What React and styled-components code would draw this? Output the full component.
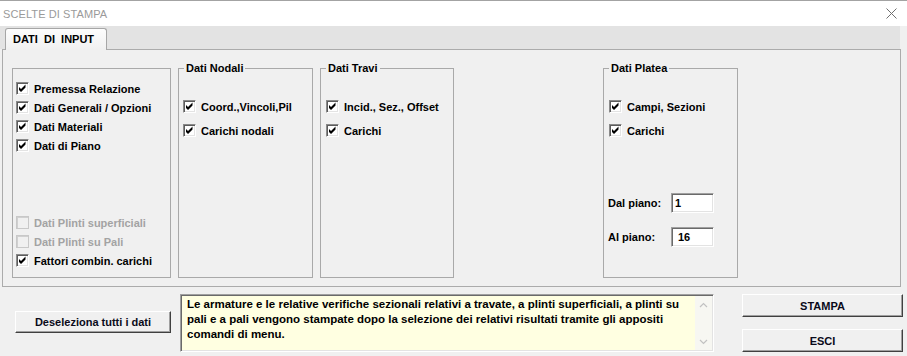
import React from 'react'
import styled, { createGlobalStyle } from 'styled-components'

const GlobalStyle = createGlobalStyle`
    html, body {
        margin:0;
        padding:0;
        background-color:#f0f0f0;
        font-family:"Liberation Sans", Arial, sans-serif;
        font-size:11px;
    }
`

const Window = styled.div`
    width:907px;
    height:356px;
    display:flex;
    flex-direction:column;
    background-color:#f0f0f0;
    overflow:hidden;
`

const TitleBar = styled.div`
    box-sizing:border-box;
    height:26px;
    border-top:1px solid #a3a3a3;
    background-color:#ffffff;
    display:flex;
    align-items:center;
    justify-content:space-between;
    padding:0 10px 0 3px;
`

const Title = styled.span`
    color:#9a9a9a;
    font-size:11px;
    letter-spacing:0.1px;
`

const TabStrip = styled.div`
    height:23px;
    margin-right:7px;
    padding-left:5px;
    background-color:#e3e3e3;
    display:flex;
    align-items:flex-end;
`

const Tab = styled.div`
    position:relative;
    z-index:1;
    box-sizing:border-box;
    width:102px;
    height:22px;
    margin-bottom:-1px;
    padding:4px 0 0 7px;
    border:1px solid #a6a6a6;
    border-bottom:none;
    border-radius:3px 3px 0 0;
    background:linear-gradient(#fdfdfd, #f0f0f0);
    font-weight:bold;
    white-space:pre;
    color:#000;
`

const Panel = styled.div`
    box-sizing:border-box;
    height:238px;
    margin:0 6px 0 2px;
    padding:18px 0 0 9px;
    border:1px solid #ababab;
    display:flex;
    gap:7px;
`

const GroupBox = styled.div`
    position:relative;
    box-sizing:border-box;
    width:${p => p.w}px;
    height:210px;
    margin-left:${p => p.ml || 0}px;
    border:1px solid #a9a9a9;
    display:flex;
    flex-direction:column;
    padding:${p => p.pad};
`

const Legend = styled.span`
    position:absolute;
    top:-7px;
    left:5px;
    padding:0 2px;
    background-color:#f0f0f0;
    font-weight:bold;
    line-height:13px;
`

const Row = styled.label`
    display:flex;
    align-items:center;
    gap:5px;
    height:19px;
    margin-top:${p => p.mt || 0}px;
    font-weight:bold;
    white-space:nowrap;
    color:${p => (p.disabled ? '#a3a3a3' : '#000')};
`

const Box = styled.span`
    box-sizing:border-box;
    width:13px;
    height:13px;
    flex:none;
    display:flex;
    border-top:1px solid #8a8a8a;
    border-left:1px solid #8a8a8a;
    border-bottom:1px solid #ffffff;
    border-right:1px solid #ffffff;
    box-shadow:inset 1px 1px #5c5c5c, inset -1px -1px #e3e3e3;
    background-color:${p => (p.disabled ? '#f0f0f0' : '#ffffff')};
    ${p => p.disabled && 'border-color:#c8c8c8; box-shadow:inset 1px 1px #d0d0d0;'}
`

const Spacer = styled.div`
    flex:1;
`

const FieldRow = styled.div`
    display:flex;
    align-items:center;
    height:20px;
    margin-top:${p => p.mt}px;
    margin-left:-1px;
    font-weight:bold;
`

const FieldLabel = styled.span`
    width:63px;
`

const Field = styled.div`
    box-sizing:border-box;
    width:43px;
    height:20px;
    padding:3px 0 0 ${p => p.indent}px;
    background-color:#ffffff;
    border-top:1px solid #a0a0a0;
    border-left:1px solid #a0a0a0;
    border-bottom:1px solid #ffffff;
    border-right:1px solid #ffffff;
    box-shadow:inset 1px 1px #6a6a6a, inset -1px -1px #e3e3e3;
    font-weight:bold;
`

const BottomBar = styled.div`
    display:flex;
    align-items:flex-start;
    margin-top:7px;
    padding-left:15px;
`

const Button = styled.div`
    box-sizing:border-box;
    width:${p => p.w}px;
    height:${p => p.h}px;
    margin-top:${p => p.mt || 0}px;
    display:flex;
    align-items:center;
    justify-content:center;
    background-color:#f0f0f0;
    border-top:1px solid #ffffff;
    border-left:1px solid #ffffff;
    border-bottom:1px solid #404040;
    border-right:1px solid #404040;
    box-shadow:inset -1px -1px #a0a0a0;
    font-weight:bold;
    color:#0a0a1a;
`

const Note = styled.div`
    box-sizing:border-box;
    width:534px;
    height:58px;
    margin-left:9px;
    display:flex;
    background-color:#ffffe1;
    border-top:1px solid #a0a0a0;
    border-left:1px solid #a0a0a0;
    border-bottom:1px solid #ffffff;
    border-right:1px solid #ffffff;
    box-shadow:inset 1px 1px #6a6a6a, inset -1px -1px #e3e3e3;
    padding:1px;
`

const NoteText = styled.div`
    flex:1;
    overflow:hidden;
    padding:1px 0 0 5px;
    font-size:11.5px;
    font-weight:bold;
    line-height:15px;
    white-space:nowrap;
    color:#000;
`

const ScrollTrack = styled.div`
    width:17px;
    flex:none;
    display:flex;
    flex-direction:column;
    justify-content:space-between;
    background-color:#f7f7f2;
`

const Arrow = styled.div`
    height:17px;
    display:flex;
    align-items:center;
    justify-content:center;
`

const ActionColumn = styled.div`
    display:flex;
    flex-direction:column;
    gap:12px;
    margin-left:28px;
`

const Check = ({ checked, disabled }) => (
    <Box disabled={disabled}>
        {checked && (
            <svg width="11" height="11" viewBox="1 1 11 11">
                <path d="M3 5 L5 7 L9.5 2.5 L9.5 5.5 L5 10 L3 8 Z" fill="#000" />
            </svg>
        )}
    </Box>
)

const Option = ({ label, checked = true, disabled, mt }) => (
    <Row disabled={disabled} mt={mt}>
        <Check checked={checked} disabled={disabled} />
        {label}
    </Row>
)

const Chevron = ({ up }) => (
    <svg width="9" height="6" viewBox="0 0 9 6">
        <polyline
            points={up ? '1,5 4.5,1.5 8,5' : '1,1 4.5,4.5 8,1'}
            fill="none"
            stroke="#c2c2c2"
            strokeWidth="1.2"
        />
    </svg>
)

const App = () => {
    return (
        <Window>
            <GlobalStyle />
            <TitleBar>
                <Title>SCELTE DI STAMPA</Title>
                <svg width="11" height="11" viewBox="0 0 11 11">
                    <path d="M0.5 0.5 L10.5 10.5 M10.5 0.5 L0.5 10.5" stroke="#6f6f6f" strokeWidth="1" />
                </svg>
            </TitleBar>

            <TabStrip>
                <Tab>DATI  DI  INPUT</Tab>
            </TabStrip>

            <Panel>
                <GroupBox w={159} pad="10px 0 7px 3px">
                    <Option label="Premessa Relazione" />
                    <Option label="Dati Generali / Opzioni" />
                    <Option label="Dati Materiali" />
                    <Option label="Dati di Piano" />
                    <Spacer />
                    <Option label="Dati Plinti superficiali" checked={false} disabled />
                    <Option label="Dati Plinti su Pali" checked={false} disabled />
                    <Option label="Fattori combin. carichi" />
                </GroupBox>

                <GroupBox w={135} pad="28px 0 0 4px">
                    <Legend>Dati Nodali</Legend>
                    <Option label="Coord.,Vincoli,Pil" />
                    <Option label="Carichi nodali" mt={5} />
                </GroupBox>

                <GroupBox w={134} pad="28px 0 0 5px">
                    <Legend>Dati Travi</Legend>
                    <Option label="Incid., Sez., Offset" />
                    <Option label="Carichi" mt={5} />
                </GroupBox>

                <GroupBox w={135} ml={142} pad="28px 0 0 5px">
                    <Legend>Dati Platea</Legend>
                    <Option label="Campi, Sezioni" />
                    <Option label="Carichi" mt={5} />
                    <FieldRow mt={53}>
                        <FieldLabel>Dal piano:</FieldLabel>
                        <Field indent={3}>1</Field>
                    </FieldRow>
                    <FieldRow mt={14}>
                        <FieldLabel>Al piano:</FieldLabel>
                        <Field indent={6}>16</Field>
                    </FieldRow>
                </GroupBox>
            </Panel>

            <BottomBar>
                <Button w={156} h={22} mt={17}>Deseleziona tutti i dati</Button>
                <Note>
                    <NoteText>
                        Le armature e le relative verifiche sezionali relativi a travate, a plinti superficiali, a plinti su
                        <br />
                        pali e a pali vengono stampate dopo la selezione dei relativi risultati tramite gli appositi
                        <br />
                        comandi di menu.
                    </NoteText>
                    <ScrollTrack>
                        <Arrow><Chevron up /></Arrow>
                        <Arrow><Chevron /></Arrow>
                    </ScrollTrack>
                </Note>
                <ActionColumn>
                    <Button w={161} h={23}>STAMPA</Button>
                    <Button w={161} h={23}>ESCI</Button>
                </ActionColumn>
            </BottomBar>
        </Window>
    )
}

export default App
